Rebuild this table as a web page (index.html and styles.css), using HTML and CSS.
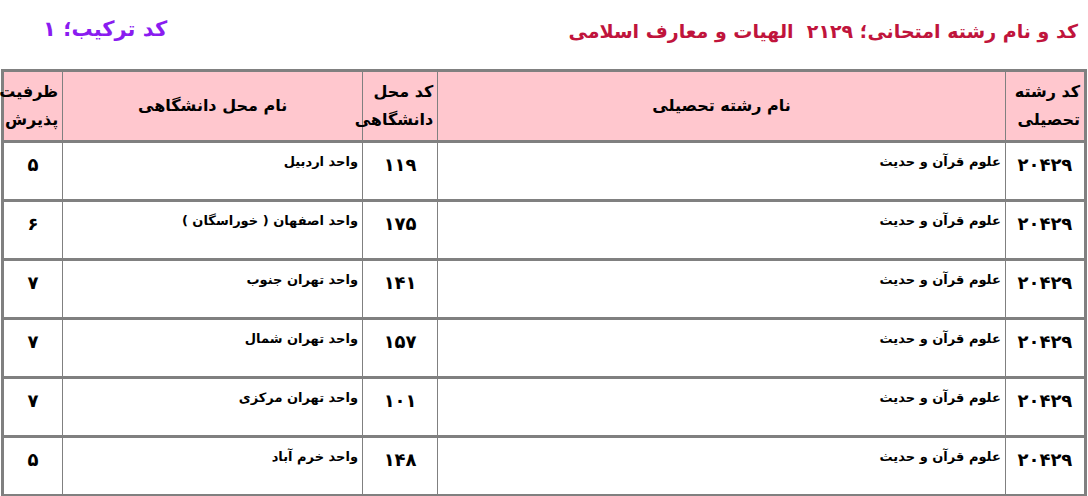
FILE: index.html
```html
<!DOCTYPE html>
<html lang="fa" dir="rtl">
<head>
<meta charset="utf-8">
<link rel="stylesheet" href="styles.css">
</head>
<body>
<div class="titles">
  <div class="main-title">کد و نام رشته امتحانی؛ ۲۱۲۹&nbsp; الهیات و معارف اسلامی</div>
  <div class="combo">کد ترکیب؛ ۱</div>
</div>
<table class="grid">
  <colgroup>
    <col class="c-code">
    <col class="c-name">
    <col class="c-loc">
    <col class="c-uni">
    <col class="c-cap">
  </colgroup>
  <thead>
    <tr>
      <th class="h-right">کد رشته<br>تحصیلی</th>
      <th>نام رشته تحصیلی</th>
      <th class="h-right">کد محل<br>دانشگاهی</th>
      <th>نام محل دانشگاهی</th>
      <th class="h-right">ظرفیت<br>پذیرش</th>
    </tr>
  </thead>
  <tbody>
    <tr><td class="num">۲۰۴۲۹</td><td class="txt">علوم قرآن و حدیث</td><td class="num">۱۱۹</td><td class="txt">واحد اردبیل</td><td class="num">۵</td></tr>
    <tr><td class="num">۲۰۴۲۹</td><td class="txt">علوم قرآن و حدیث</td><td class="num">۱۷۵</td><td class="txt">واحد اصفهان ( خوراسگان )</td><td class="num">۶</td></tr>
    <tr><td class="num">۲۰۴۲۹</td><td class="txt">علوم قرآن و حدیث</td><td class="num">۱۴۱</td><td class="txt">واحد تهران جنوب</td><td class="num">۷</td></tr>
    <tr><td class="num">۲۰۴۲۹</td><td class="txt">علوم قرآن و حدیث</td><td class="num">۱۵۷</td><td class="txt">واحد تهران شمال</td><td class="num">۷</td></tr>
    <tr><td class="num">۲۰۴۲۹</td><td class="txt">علوم قرآن و حدیث</td><td class="num">۱۰۱</td><td class="txt">واحد تهران مرکزی</td><td class="num">۷</td></tr>
    <tr><td class="num">۲۰۴۲۹</td><td class="txt">علوم قرآن و حدیث</td><td class="num">۱۴۸</td><td class="txt">واحد خرم آباد</td><td class="num">۵</td></tr>
  </tbody>
</table>
</body>
</html>
```

FILE: styles.css
```css
html, body {
  margin: 0;
  padding: 0;
  background: #ffffff;
}
body {
  font-family: "DejaVu Sans", "Noto Sans", sans-serif;
  color: #000;
  width: 1088px;
  height: 496px;
  overflow: hidden;
}
.titles {
  display: flex;
  justify-content: space-between;
  align-items: center;
  height: 69px;
  padding: 0 10px 0 0;
  box-sizing: border-box;
}
.main-title {
  color: #c0143c;
  font-weight: bold;
  font-size: 19px;
  padding-bottom: 8px;
}
.combo {
  color: #8a1cf0;
  font-weight: bold;
  font-size: 21px;
  padding-left: 43px;
  padding-bottom: 12px;
}
.grid {
  border-collapse: collapse;
  width: 1086px;
  margin-right: 1px;
  table-layout: fixed;
  border: 3px solid #808080;
}
.c-code { width: 80px; }
.c-name { width: 566px; }
.c-loc { width: 75px; }
.c-uni { width: 299px; }
.c-cap { width: 60px; }
.grid th, .grid td {
  border-left: 1px solid #808080;
  border-right: 1px solid #808080;
  border-top: 3px solid #808080;
  border-bottom: 3px solid #808080;
  padding: 0;
}
.grid th {
  background: #ffc7ce;
  height: 68px;
  font-size: 16px;
  font-weight: bold;
  text-align: center;
  vertical-align: middle;
  line-height: 28px;
}
.grid th.h-right {
  text-align: right;
  padding-right: 4px;
}
.grid td {
  vertical-align: top;
}
.grid td.num {
  text-align: center;
  font-weight: bold;
  font-size: 18px;
  padding-top: 11px;
  height: 45px;
}
.grid td.txt {
  text-align: right;
  font-weight: bold;
  font-size: 13px;
  padding-right: 4px;
  padding-top: 11px;
  height: 45px;
}
```
